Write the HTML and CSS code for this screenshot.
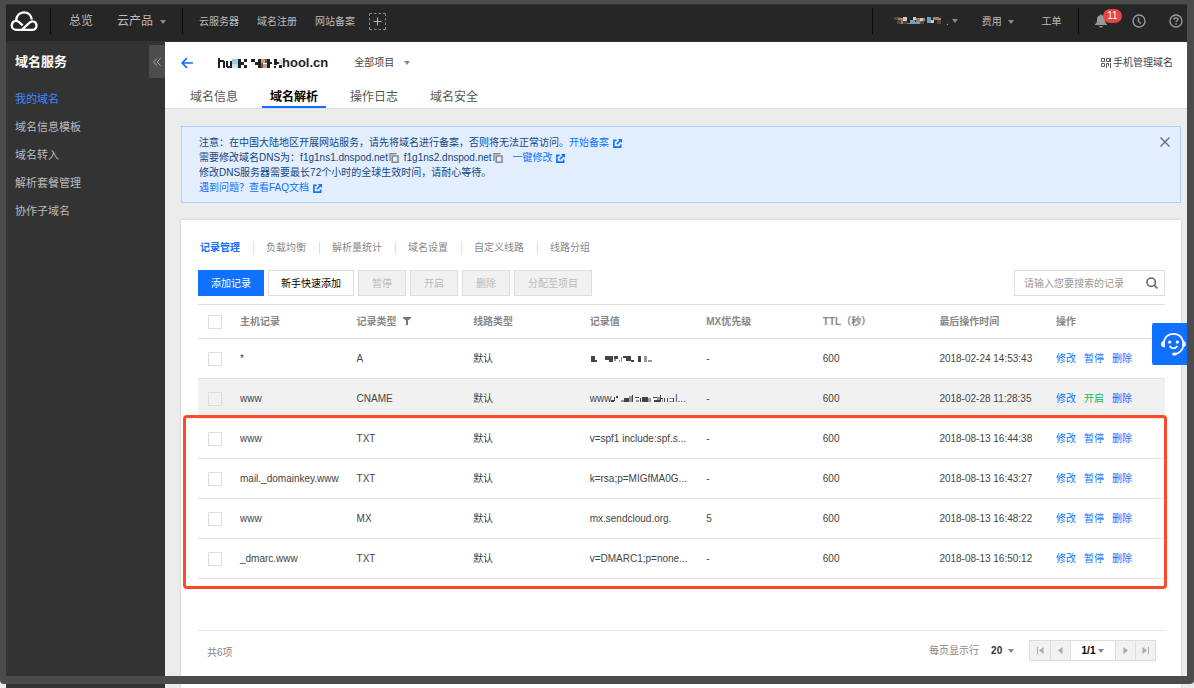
FILE: index.html
```html
<!DOCTYPE html>
<html lang="zh-CN">
<head>
    <meta charset="UTF-8">
    <meta name="viewport" content="width=device-width, initial-scale=1.0">
    <title>域名解析</title>
    <link rel="stylesheet" href="styles.css">
</head>
<body>
    <!-- shared icons -->
    <svg class="icon-defs" aria-hidden="true">
        <symbol id="icon-external" viewBox="0 0 10 10">
            <path d="M4 1.5H1v7.5h7.5V6" fill="none" stroke="currentColor" stroke-width="1.8"/>
            <path d="M5.5 0H10v4.5L8.4 2.9 4.9 6.4 3.6 5.1 7.1 1.6z" fill="currentColor"/>
        </symbol>
        <symbol id="icon-copy" viewBox="0 0 10 10">
            <path d="M1 8V.8h6.5" fill="none" stroke="currentColor" stroke-width="1.4"/>
            <path d="M3.2 3h5.9v6.2H3.2z" fill="none" stroke="currentColor" stroke-width="1.6"/>
        </symbol>
    </svg>

    <!-- Top bar -->
    <header class="topbar">
        <a class="logo" href="#" aria-label="首页">
            <svg width="28" height="22" viewBox="0 0 28 22" fill="none" stroke="#fff" stroke-width="2.3">
                <path d="M11.800 19.800 19.600 12.600c3-2.600 6.900-.8 6.900 2.900 0 2.500-1.800 4.300-4.300 4.300H6.300c-2.600 0-4.500-1.900-4.500-4.400 0-3.900 4.200-5.900 7.300-3.200l3.600 3.200"/>
                <path d="M6.200 10.300C6.400 5.600 9.600 2.300 14 2.300c4.200 0 7.200 2.900 7.800 7.200"/>
            </svg>
        </a>
        <nav class="topnav">
            <a class="big" href="#">总览</a>
            <a class="big products" href="#">云产品 <i class="caret"></i></a>
        </nav>
        <nav class="shortcuts">
            <a href="#">云服务器</a>
            <a href="#">域名注册</a>
            <a href="#">网站备案</a>
            <button class="add-shortcut" type="button" aria-label="添加">
                <svg width="17" height="17" viewBox="0 0 17 17" fill="none" stroke="#888">
                    <path d="M.5 3V.5H3M14 .5h2.500V3M16.500 14v2.500H14M3 16.500H.5V14M5 .5h2.500M9.500 .5H12M5 16.500h2.500M9.500 16.500H12M.5 5v2.500M.5 9.500V12M16.500 5v2.500M16.500 9.500V12"/>
                    <path d="M8.500 4.500v8M4.500 8.500h8" stroke="#bbb"/>
                </svg>
            </button>
        </nav>
        <div class="account">
            <a class="user" href="#">
                <svg width="48" height="8" viewBox="0 0 48 8">
                    <path fill="#59463e" d="M0 0h3v3H0zM3 0h4v7H3zM9 4h4v3H9zM26 4h4v3h-4zM43 3h4v4h-4z"/>
                    <path fill="#a67c62" d="M4 1h5v2H4zM22 1h5v4h-5zM39 0h6v3h-6zM7 3h2v4H7z"/>
                    <path fill="#c9c7c4" d="M9 0h4v4H9zM19 0h3v3h-3zM26 1h3v3h-3zM37 3h3v3h-3z"/>
                    <path fill="#6e9fc0" d="M16 3h5v4h-5zM33 0h4v6h-4zM21 5h5v2h-5z"/>
                    <path fill="#8d8a87" d="M13 6h3v1h-3zM29 1h2v3h-2zM45 1h2v2h-2z"/>
                </svg>
                <span>.</span><i class="caret"></i>
            </a>
            <a href="#">费用 <i class="caret"></i></a>
            <a class="ticket" href="#">工单</a>
        </div>
        <div class="tools">
            <button class="bell" type="button" aria-label="消息">
                <svg width="12" height="14" viewBox="0 0 12 14" fill="#999">
                    <path d="M6 0l1 1.300C9.300 1.900 10 3.500 10 5.500c0 3 .6 3.900 2 4.700v.8H0v-.8c1.400-.8 2-1.700 2-4.700 0-2 .7-3.600 3-4.200zM4 12h4c-.3 1-1 1.600-2 1.600S4.300 13 4 12z"/>
                </svg>
                <span class="badge">11</span>
            </button>
            <button type="button" aria-label="历史">
                <svg width="14" height="14" viewBox="0 0 14 14" fill="none" stroke="#999" stroke-width="1.400">
                    <circle cx="7" cy="7" r="6"/><path d="M6.500 3.500v4l2.500 2"/>
                </svg>
            </button>
            <button type="button" aria-label="帮助">
                <svg width="14" height="14" viewBox="0 0 14 14" fill="none" stroke="#999" stroke-width="1.400">
                    <circle cx="7" cy="7" r="6"/><path d="M5 5.800C5 3.200 9 3.200 9 5.500 9 6.800 7 6.800 7 8.300M7 9.300v1.400"/>
                </svg>
            </button>
        </div>
    </header>

    <div class="layout">
        <aside class="sidebar">
            <div class="sidebar-head">
                <h2>域名服务</h2>
                <button class="collapse" type="button" aria-label="收起">
                    <svg width="8" height="8" viewBox="0 0 9 9" fill="none" stroke="#aaa" stroke-width="1.100"><path d="M4.500.5l-4 4 4 4M8.500.5l-4 4 4 4"/></svg>
                </button>
            </div>
            <nav class="menu">
                <a class="active" href="#">我的域名</a>
                <a href="#">域名信息模板</a>
                <a href="#">域名转入</a>
                <a href="#">解析套餐管理</a>
                <a href="#">协作子域名</a>
            </nav>
        </aside>

        <main class="main">
            <div class="page-head">
                <div class="title-row">
                    <a class="back" href="#" aria-label="返回">
                        <svg width="12" height="12" viewBox="0 0 12 12" fill="none" stroke="#1070ff" stroke-width="1.700"><path d="M12 6H1.500M6 1L1.200 6 6 11"/></svg>
                    </a>
                    <h1>
                        <!-- masked part of the domain -->
                        <svg width="64" height="10" viewBox="0 0 64 10">
                            <path fill="#222" d="M0 0h2v10H0zM2 2h4v2H2zM5 3h2v7H5zM8 3h2v6H8zM9 8h4v2H9zM12 3h2v7h-2zM20 1h3v9h-3zM23 4h3v3h-3zM26 1h3v3h-3zM26 7h3v3h-3zM33 1h4v3h-4zM37 4h3v3h-3zM40 1h3v9h-3zM49 1h3v9h-3zM52 4h2v2h-2zM56 1h3v6h-3zM59 4h2v2h-2zM56 8h2v2h-2zM61 7h3v3h-3z"/>
                            <path fill="#9fcbe8" d="M14 1h6v5h-6z"/>
                            <path fill="#c6e0f0" d="M14 6h6v4h-6zM61 2h3v4h-3z"/>
                            <path fill="#c5a08d" d="M43 1h4v4h-4zM45 6h4v4h-4z"/>
                            <path fill="#665b58" d="M43 5h2v5h-2zM47 1h2v4h-2z"/>
                        </svg><span>hool.cn</span>
                    </h1>
                    <button class="project" type="button">全部项目 <i class="caret"></i></button>
                    <a class="mobile" href="#">
                        <svg width="10" height="10" viewBox="0 0 10 10" fill="none" stroke="#555"><path d="M.5.5h3v3h-3zM5.500.5h3v3h-3zM.5 5.500h3v3h-3zM5.500 10V5.500h2V8M9.500 5v5M9.500 0v4"/></svg>
                        手机管理域名
                    </a>
                </div>
                <nav class="tabs">
                    <a href="#">域名信息</a>
                    <a class="active" href="#">域名解析</a>
                    <a href="#">操作日志</a>
                    <a href="#">域名安全</a>
                </nav>
            </div>

            <div class="content">
                <section class="notice">
                    <p>注意：在中国大陆地区开展网站服务，请先将域名进行备案，否则将无法正常访问。<a href="#">开始备案 <svg class="ext"><use href="#icon-external"/></svg></a></p>
                    <p>需要修改域名DNS为：f1g1ns1.dnspod.net<svg class="copy"><use href="#icon-copy"/></svg> f1g1ns2.dnspod.net<svg class="copy"><use href="#icon-copy"/></svg> <a href="#">一键修改 <svg class="ext"><use href="#icon-external"/></svg></a></p>
                    <p>修改DNS服务器需要最长72个小时的全球生效时间，请耐心等待。</p>
                    <p><a href="#">遇到问题？查看FAQ文档 <svg class="ext"><use href="#icon-external"/></svg></a></p>
                    <button class="close" type="button" aria-label="关闭">
                        <svg width="10" height="10" viewBox="0 0 10 10" stroke="#666" stroke-width="1.300"><path d="M.5.5l9 9M9.500.5l-9 9"/></svg>
                    </button>
                </section>

                <section class="card">
                    <nav class="subtabs">
                        <a class="active" href="#">记录管理</a>
                        <a href="#">负载均衡</a>
                        <a href="#">解析量统计</a>
                        <a href="#">域名设置</a>
                        <a href="#">自定义线路</a>
                        <a href="#">线路分组</a>
                    </nav>

                    <div class="toolbar">
                        <button class="btn primary" type="button">添加记录</button>
                        <button class="btn" type="button">新手快速添加</button>
                        <button class="btn" type="button" disabled>暂停</button>
                        <button class="btn" type="button" disabled>开启</button>
                        <button class="btn" type="button" disabled>删除</button>
                        <button class="btn" type="button" disabled>分配至项目</button>
                        <form class="search">
                            <input type="text" aria-label="搜索记录" placeholder="请输入您要搜索的记录">
                            <button type="submit" aria-label="搜索">
                                <svg width="12" height="12" viewBox="0 0 12 12" fill="none" stroke="#666" stroke-width="1.600"><circle cx="5.200" cy="5.200" r="4.200"/><path d="M8.200 8.200l3.200 3.200"/></svg>
                            </button>
                        </form>
                    </div>

                    <div class="records">
                        <table>
                            <thead>
                                <tr>
                                    <th class="check"><input type="checkbox" aria-label="全选"></th>
                                    <th>主机记录</th>
                                    <th>记录类型 <svg class="filter" width="8" height="8" viewBox="0 0 8 8" fill="#777"><path d="M0 0h8v1.200L5 3.500V8H3V3.500L0 1.200z"/></svg></th>
                                    <th>线路类型</th>
                                    <th>记录值</th>
                                    <th>MX优先级</th>
                                    <th>TTL（秒）</th>
                                    <th>最后操作时间</th>
                                    <th class="ops">操作</th>
                                </tr>
                            </thead>
                            <tbody>
                                <tr>
                                    <td class="check"><input type="checkbox" aria-label="选择 *"></td>
                                    <td>*</td>
                                    <td>A</td>
                                    <td>默认</td>
                                    <td>
                                        <svg class="mask" width="62" height="8" viewBox="0 0 62 8">
                                            <path fill="#444" d="M1 1h4v4H1zM1 5h6v2H1zM15 1h8v4h-8zM19 5h4v2h-4zM24 1h4v3h-4zM33 1h8v2h-8zM36 3h5v3h-5zM41 5h3v2h-3zM48 1h3v6h-3z"/>
                                            <path fill="#999" d="M29 5h1v2h-1zM31 2h1v5h-1zM24 4h2v2h-2zM54 1h3v6h-3zM58 5h4v2h-4z"/>
                                        </svg>
                                    </td>
                                    <td>-</td>
                                    <td>600</td>
                                    <td>2018-02-24 14:53:43</td>
                                    <td class="ops"><a href="#">修改</a><a href="#">暂停</a><a href="#">删除</a></td>
                                </tr>
                                <tr class="paused">
                                    <td class="check"><input type="checkbox" aria-label="选择 www CNAME"></td>
                                    <td>www</td>
                                    <td>CNAME</td>
                                    <td>默认</td>
                                    <td>www<svg class="mask" width="64" height="8" viewBox="0 0 64 8">
                                            <path fill="#444" d="M0 5h3v2H0zM3 2h1v4H3zM5 1h2v2H5zM13 3h5v4h-5zM21 0h1v7h-1zM24 2h4v1h-4zM29 3h1v4h-1zM31 2h6v5h-6zM42 2h4v1h-4zM43 5h6v2h-6zM49 0h1v7h-1zM50 3h2v1h-2zM53 3h1v4h-1zM56 3h1v4h-1zM62 3h1v4h-1z"/>
                                            <path fill="#999" d="M10 5h3v2h-3zM18 1h3v6h-3zM25 5h3v2h-3zM37 3h3v4h-3zM46 2h3v3h-3zM51 4h1v3h-1zM58 3h4v1h-4zM58 6h4v1h-4z"/>
                                        </svg>l...</td>
                                    <td>-</td>
                                    <td>600</td>
                                    <td>2018-02-28 11:28:35</td>
                                    <td class="ops"><a href="#">修改</a><a class="enable" href="#">开启</a><a href="#">删除</a></td>
                                </tr>
                                <tr>
                                    <td class="check"><input type="checkbox" aria-label="选择 www TXT"></td>
                                    <td>www</td>
                                    <td>TXT</td>
                                    <td>默认</td>
                                    <td>v=spf1 include:spf.s...</td>
                                    <td>-</td>
                                    <td>600</td>
                                    <td>2018-08-13 16:44:38</td>
                                    <td class="ops"><a href="#">修改</a><a href="#">暂停</a><a href="#">删除</a></td>
                                </tr>
                                <tr>
                                    <td class="check"><input type="checkbox" aria-label="选择 mail._domainkey.www"></td>
                                    <td>mail._domainkey.www</td>
                                    <td>TXT</td>
                                    <td>默认</td>
                                    <td>k=rsa;p=MIGfMA0G...</td>
                                    <td>-</td>
                                    <td>600</td>
                                    <td>2018-08-13 16:43:27</td>
                                    <td class="ops"><a href="#">修改</a><a href="#">暂停</a><a href="#">删除</a></td>
                                </tr>
                                <tr>
                                    <td class="check"><input type="checkbox" aria-label="选择 www MX"></td>
                                    <td>www</td>
                                    <td>MX</td>
                                    <td>默认</td>
                                    <td>mx.sendcloud.org.</td>
                                    <td>5</td>
                                    <td>600</td>
                                    <td>2018-08-13 16:48:22</td>
                                    <td class="ops"><a href="#">修改</a><a href="#">暂停</a><a href="#">删除</a></td>
                                </tr>
                                <tr>
                                    <td class="check"><input type="checkbox" aria-label="选择 _dmarc.www"></td>
                                    <td>_dmarc.www</td>
                                    <td>TXT</td>
                                    <td>默认</td>
                                    <td>v=DMARC1;p=none...</td>
                                    <td>-</td>
                                    <td>600</td>
                                    <td>2018-08-13 16:50:12</td>
                                    <td class="ops"><a href="#">修改</a><a href="#">暂停</a><a href="#">删除</a></td>
                                </tr>
                            </tbody>
                        </table>
                        <div class="highlight"></div>
                    </div>

                    <footer class="pager">
                        <span class="total">共6项</span>
                        <span>每页显示行</span>
                        <button class="size" type="button">20 <i class="caret"></i></button>
                        <div class="pages">
                            <button type="button" aria-label="首页" disabled><svg width="7" height="7" viewBox="0 0 7 7" fill="#aaa"><path d="M0 0h1v7H0zM6.500 0v7L2 3.500z"/></svg></button>
                            <button type="button" aria-label="上一页" disabled><svg width="7" height="7" viewBox="0 0 7 7" fill="#aaa"><path d="M5.500 0v7L1 3.500z"/></svg></button>
                            <button class="current" type="button">1/1 <i class="caret"></i></button>
                            <button type="button" aria-label="下一页" disabled><svg width="7" height="7" viewBox="0 0 7 7" fill="#aaa"><path d="M1.500 0v7L6 3.500z"/></svg></button>
                            <button type="button" aria-label="末页" disabled><svg width="7" height="7" viewBox="0 0 7 7" fill="#aaa"><path d="M6 0h1v7H6zM.5 0v7L5 3.500z"/></svg></button>
                        </div>
                    </footer>
                </section>
            </div>
        </main>
    </div>

    <button class="service" type="button" aria-label="在线客服">
        <svg width="27" height="25" viewBox="0 0 28 26" fill="none" stroke="#fff" stroke-width="1.800">
            <path d="M4 9.500C5.500 4.500 9.300 2 14 2s8.500 2.500 10 7.500M24 15.500c-1.300 4-4 6.500-8.500 7.300"/>
            <path d="M10.500 15c1.600 2.600 5.400 2.600 7 0" stroke-linecap="round"/>
            <path d="M5 9v7c-2.500 0-4-1.500-4-3.500S2.500 9 5 9zM23 9v7c2.500 0 4-1.500 4-3.500S25.500 9 23 9z" fill="#fff" stroke="none"/>
            <circle cx="10" cy="10.500" r="1.700" fill="#fff" stroke="none"/>
            <circle cx="18" cy="10.500" r="1.700" fill="#fff" stroke="none"/>
            <ellipse cx="15" cy="23" rx="2.500" ry="1.800" fill="#fff" stroke="none"/>
        </svg>
    </button>
    <div class="frame"></div>
</body>
</html>
```
FILE: styles.css
```css
* {
    box-sizing: border-box;
}

body {
    position: relative;
    display: flex;
    flex-direction: column;
    min-height: 100vh;
    margin: 0;
    padding: 4px 7px 0 6px;
    background: #ececec;
    color: #444;
    font-family: "Liberation Sans", "Noto Sans CJK SC", sans-serif;
    font-size: 10px;
    line-height: 15px;
}

a {
    color: #1070ff;
    text-decoration: none;
}

button {
    padding: 0;
    border: none;
    background: none;
    color: inherit;
    font: inherit;
    cursor: pointer;
}

h1, h2, p {
    margin: 0;
}

.icon-defs {
    position: absolute;
    width: 0;
    height: 0;
}

.caret {
    display: inline-block;
    margin-left: 3px;
    border: 3px solid transparent;
    border-top: 4px solid #888;
    border-bottom: 0;
    vertical-align: 1px;
}

/* Dark frame drawn round the whole window */
.frame {
    position: absolute;
    top: 0;
    right: 0;
    bottom: 4px;
    left: 0;
    border: solid #4b4b4b;
    border-width: 4px 7px 8px 6px;
    border-radius: 0 0 4px 4px;
    pointer-events: none;
}

/* --- Top bar --- */
.topbar {
    display: flex;
    align-items: center;
    height: 38px;
    padding-bottom: 4px;
    border-top: 1px solid #333;
    border-bottom: 1px solid #333;
    background: #262626;
}

.topbar a {
    color: #bbb;
    white-space: nowrap;
}

.logo {
    display: flex;
    width: 44px;
    padding-left: 4px;
}

.topnav,
.shortcuts,
.account,
.tools {
    display: flex;
    align-items: center;
    height: 26px;
    border-left: 1px solid #0c0c0c;
}

.topnav {
    gap: 24px;
    width: 132px;
    padding-left: 18px;
}

.topnav .big {
    font-size: 12px;
}

.topnav .caret {
    margin-left: 4px;
}

.shortcuts {
    gap: 18px;
    padding-left: 16px;
}

.add-shortcut {
    display: flex;
    margin-left: -4px;
}

.account {
    gap: 24px;
    width: 206px;
    margin-left: auto;
    padding-left: 21px;
}

.account .ticket {
    margin-left: 4px;
}

.user {
    display: flex;
    align-items: center;
}

.user span {
    margin-left: 4px;
}

.tools {
    gap: 23px;
    padding: 0 4px 0 16px;
}

.tools button {
    display: flex;
}

.bell {
    position: relative;
    margin-right: 2px;
}

.badge {
    position: absolute;
    top: -5px;
    left: 8px;
    width: 19px;
    border-radius: 7px;
    background: #e54545;
    color: #fff;
    line-height: 14px;
    text-align: center;
}

/* --- Sidebar --- */
.layout {
    display: flex;
    flex: 1;
}

.sidebar {
    flex: 0 0 159px;
    background: #333;
}

.sidebar-head {
    display: flex;
    align-items: center;
    justify-content: space-between;
    padding: 3px 0 0 9px;
}

.sidebar h2 {
    color: #fff;
    font-size: 13px;
    line-height: 20px;
}

.collapse {
    display: flex;
    align-items: center;
    justify-content: center;
    width: 16px;
    height: 33px;
    border-radius: 2px 0 0 2px;
    background: #4d4d4d;
}

.menu {
    display: flex;
    flex-direction: column;
    padding-top: 7px;
}

.menu a {
    padding-left: 9px;
    color: #bbb;
    font-size: 11px;
    line-height: 28px;
}

.menu a.active {
    color: #3d8bff;
}

/* --- Page head --- */
.main {
    display: flex;
    flex: 1;
    flex-direction: column;
    min-width: 0;
}

.page-head {
    border-bottom: 1px solid #ddd;
    background: #fff;
}

.title-row {
    display: flex;
    align-items: center;
    height: 41px;
    padding: 0 14px 0 16px;
}

.back {
    display: flex;
}

h1 {
    display: flex;
    align-items: center;
    margin-left: 25px;
    color: #222;
    font-size: 13px;
}

.project {
    margin-left: 26px;
}

.project .caret {
    margin-left: 7px;
}

.mobile {
    display: flex;
    align-items: center;
    gap: 2px;
    margin-left: auto;
    color: #444;
}

.tabs {
    display: flex;
    gap: 16px;
    padding-left: 17px;
}

.tabs a {
    padding: 5px 8px 0;
    border-bottom: 2px solid transparent;
    color: #555;
    font-size: 12px;
    line-height: 18px;
}

.tabs a.active {
    border-color: #1070ff;
    color: #000;
    font-weight: bold;
}

.content {
    display: flex;
    flex: 1;
    flex-direction: column;
    padding: 17px 6px 0 16px;
}

/* --- Notice --- */
.notice {
    position: relative;
    padding: 8px 17px 7px;
    border: 1px solid #a8d2ff;
    background: #e3efff;
    color: #154680;
}

.ext,
.copy {
    width: 9px;
    height: 9px;
    vertical-align: -2px;
}

.ext {
    margin-left: 1px;
}

.copy {
    width: 10px;
    height: 10px;
    margin: 0 2px 0 1px;
    color: #888;
}

.copy + a {
    margin-left: 5px;
}

.close {
    position: absolute;
    top: 10px;
    right: 10px;
    display: flex;
}

/* --- Records card --- */
.card {
    flex: 1;
    margin-top: 17px;
    padding: 20px 16px 0 17px;
    background: #fff;
    box-shadow: 0 0 2px rgba(0, 0, 0, 0.2);
}

.subtabs {
    display: flex;
    padding-left: 2px;
}

.subtabs a {
    display: flex;
    align-items: center;
    color: #888;
}

.subtabs a + a::before {
    width: 1px;
    height: 12px;
    margin: 0 12px 0 13px;
    background: #ddd;
    content: "";
}

.subtabs a.active {
    color: #1070ff;
    font-weight: bold;
}

.toolbar {
    display: flex;
    gap: 4px;
    margin-top: 15px;
}

.btn {
    height: 26px;
    padding: 0 12px;
    border: 1px solid #ddd;
    background: #fff;
    color: #000;
}

.btn.primary {
    border-color: #1070ff;
    background: #1070ff;
    color: #fff;
}

.btn:disabled {
    padding: 0 13px;
    background: #f1f1f1;
    color: #bbb;
}

.search {
    display: flex;
    width: 151px;
    height: 26px;
    margin-left: auto;
    border: 1px solid #ddd;
}

.search input {
    flex: 1;
    min-width: 0;
    padding: 0 9px;
    border: none;
    outline: none;
    font: inherit;
}

.search input::placeholder {
    color: #999;
}

.search button {
    display: flex;
    align-items: center;
    padding-right: 6px;
}

.records {
    position: relative;
    margin-top: 8px;
}

table {
    width: 100%;
    border-collapse: collapse;
    border-top: 1px solid #ddd;
    table-layout: fixed;
}

th,
td {
    height: 40px;
    padding: 0;
    border-bottom: 1px solid #e5e5e5;
    text-align: left;
    white-space: nowrap;
}

th {
    height: 34px;
    border-color: #ddd;
    color: #888;
}

.check {
    width: 42px;
    padding-left: 10px;
}

.check input {
    display: block;
    width: 14px;
    height: 14px;
    margin: 0;
    border: 1px solid #ddd;
    appearance: none;
}

.ops {
    width: 109px;
}

.ops a + a {
    margin-left: 8px;
}

.ops .enable {
    color: #0abf5b;
}

.paused {
    background: #f1f1f1;
}

.filter {
    margin-left: 4px;
}

.mask {
    vertical-align: -1px;
}

/* Red outline round the four records to check */
.highlight {
    position: absolute;
    top: 111px;
    right: -2px;
    bottom: -10px;
    left: -15px;
    border: 3px solid #ff4a2a;
    border-radius: 4px;
    pointer-events: none;
}

/* --- Pager --- */
.pager {
    display: flex;
    align-items: center;
    margin-top: 51px;
    padding: 9px 9px 14px;
    border-top: 1px solid #e5e5e5;
    color: #888;
}

.total {
    margin-right: auto;
    padding-top: 4px;
}

.size {
    margin: 0 15px 0 12px;
    color: #333;
    font-weight: bold;
}

.pages {
    display: flex;
    border: 1px solid #ddd;
}

.pages button {
    display: flex;
    align-items: center;
    justify-content: center;
    width: 20px;
    height: 19px;
    background: #f1f1f1;
}

.pages button + button {
    border-left: 1px solid #ddd;
}

.pages .current {
    width: 45px;
    background: #fff;
    color: #000;
    font-weight: bold;
}

/* --- Customer service --- */
.service {
    position: absolute;
    top: 323px;
    right: 7px;
    display: flex;
    align-items: center;
    justify-content: flex-end;
    width: 35px;
    height: 42px;
    border-radius: 2px 0 0 2px;
    background: #1070ff;
}
```
